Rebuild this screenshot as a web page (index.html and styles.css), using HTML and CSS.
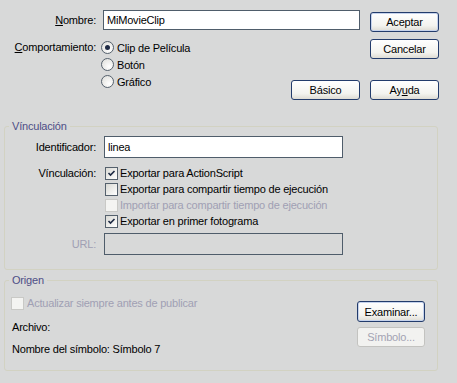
FILE: index.html
```html
<!DOCTYPE html>
<html>
<head>
  <link rel="stylesheet" href="styles.css">
</head>
<body>
  <div class="dialog">
    <div class="top">
      <div class="main">
        <div class="row">
          <label class="label" for="symbolName"><u>N</u>ombre:</label>
          <input class="text name" id="symbolName" type="text" value="MiMovieClip">
        </div>
        <div class="row behaviour">
          <span class="label"><u>C</u>omportamiento:</span>
          <div class="radios">
            <div class="opt"><span class="radio on"></span>Clip de Película</div>
            <div class="opt"><span class="radio"></span>Botón</div>
            <div class="opt"><span class="radio"></span>Gráfico</div>
          </div>
          <button class="btn basic">Básico</button>
        </div>
      </div>
      <div class="actions">
        <button class="btn default">Aceptar</button>
        <button class="btn">Cancelar</button>
        <button class="btn help">Ay<u>u</u>da</button>
      </div>
    </div>

    <fieldset class="group linkage">
      <legend>Vínculación</legend>
      <div class="field">
        <label class="flabel" for="identifier">Identificador:</label>
        <input class="text wide" id="identifier" type="text" value="linea">
      </div>
      <div class="field checks-row">
        <span class="flabel">Vínculación:</span>
        <div class="checks">
          <div class="opt">
            <span class="check"><svg width="11" height="11" viewBox="0 0 11 11"><path d="M2.5 5 L4.5 7 L8.5 3" fill="none" stroke="#1e2a44" stroke-width="1.6"/></svg></span>Exportar para ActionScript
          </div>
          <div class="opt"><span class="check"></span>Exportar para compartir tiempo de ejecución</div>
          <div class="opt off"><span class="check"></span>Importar para compartir tiempo de ejecución</div>
          <div class="opt">
            <span class="check"><svg width="11" height="11" viewBox="0 0 11 11"><path d="M2.5 5 L4.5 7 L8.5 3" fill="none" stroke="#1e2a44" stroke-width="1.6"/></svg></span>Exportar en primer fotograma
          </div>
        </div>
      </div>
      <div class="field url">
        <span class="flabel off">URL:</span>
        <input class="text wide" type="text" disabled>
      </div>
    </fieldset>

    <fieldset class="group origin">
      <legend>Origen</legend>
      <div class="origin-body">
        <div class="origin-info">
          <div class="opt off"><span class="check"></span>Actualizar siempre antes de publicar</div>
          <div class="line file">Archivo:</div>
          <div class="line">Nombre del símbolo: Símbolo 7</div>
        </div>
        <div class="origin-actions">
          <button class="btn default">Examinar...</button>
          <button class="btn" disabled>Símbolo...</button>
        </div>
      </div>
    </fieldset>
  </div>
</body>
</html>
```

FILE: styles.css
```css
body {
  margin: 0;
  background: #d8d9d9;
}

.dialog {
  width: 457px;
  height: 383px;
  font-family: "Liberation Sans", Arial, sans-serif;
  font-size: 11px;
  letter-spacing: -0.2px;
  color: #000000;
}

u {
  text-decoration: underline;
}

/* top area */

.top {
  display: flex;
  height: 100px;
  padding-top: 10px;
  box-sizing: border-box;
}

.main {
  width: 360px;
}

.row {
  display: flex;
  align-items: center;
}

.label {
  width: 96px;
  margin-right: 7px;
  text-align: right;
  white-space: nowrap;
}

.text {
  box-sizing: border-box;
  height: 20px;
  margin: 0;
  padding: 0 3px;
  border: 1px solid #4f5d6b;
  background: #FFFFFF;
  font: inherit;
  letter-spacing: inherit;
  color: #000000;
  outline: none;
}

.name {
  width: 257px;
}

.behaviour {
  align-items: flex-start;
  margin-top: 9px;
}

.behaviour .label {
  width: 96px;
  margin-right: 5px;
  line-height: 17px;
}

.radios {
  padding-bottom: 10px;
}

.opt {
  display: flex;
  align-items: center;
  height: 17px;
  white-space: nowrap;
}

.radio {
  box-sizing: border-box;
  width: 13px;
  height: 13px;
  margin-right: 3px;
  border: 1px solid #55616d;
  border-radius: 50%;
  background: radial-gradient(circle at 65% 70%, #FFFFFF, #dcdcd8);
  position: relative;
}

.radio.on::after {
  content: "";
  position: absolute;
  left: 3px;
  top: 3px;
  width: 5px;
  height: 5px;
  border-radius: 50%;
  background: #1e2a44;
}

.basic {
  align-self: flex-end;
  width: 83px;
  margin-left: auto;
}

.actions {
  display: flex;
  flex-direction: column;
  margin-left: 10px;
  padding-top: 2px;
}

.actions .btn + .btn {
  margin-top: 7px;
}

.actions .btn.help {
  margin-top: 21px;
}

/* buttons */

.btn {
  box-sizing: border-box;
  width: 69px;
  height: 20px;
  padding: 0;
  border: 1px solid #233c6c;
  border-radius: 3px;
  background: linear-gradient(#FFFFFF, #f3f3ef 70%, #dedcd4);
  font: inherit;
  letter-spacing: inherit;
  color: #000000;
}

.btn.default {
  box-shadow: inset 0 0 0 1px #c6d3ec;
}

.btn:disabled {
  border-color: #c3c3c0;
  background: #f2f2f0;
  color: #a3a3b3;
}

/* group boxes */

.group {
  margin: 19px 19px 0 4px;
  padding: 3px 0 14px 0;
  border: 1px solid #d2d2c2;
  border-radius: 3px;
}

.group legend {
  margin-left: 4px;
  padding: 0 3px;
  line-height: 14px;
  color: #4e4e86;
}

.field {
  display: flex;
  align-items: center;
}

.flabel {
  width: 91px;
  margin-right: 8px;
  text-align: right;
  white-space: nowrap;
}

.wide {
  width: 239px;
  height: 22px;
}

.text:disabled {
  background: #d8d9d9;
}

.checks-row {
  align-items: flex-start;
  margin-top: 7px;
}

.checks-row .flabel {
  line-height: 16px;
}

.checks {
  padding-left: 1px;
}

.checks .opt {
  height: 16px;
}

.check {
  box-sizing: border-box;
  display: flex;
  align-items: center;
  justify-content: center;
  width: 13px;
  height: 13px;
  margin-right: 2px;
  border: 1px solid #55616d;
  background: linear-gradient(135deg, #d9d9d4, #FFFFFF);
}

.off {
  color: #a0a0b4;
}

.off .check {
  border-color: #c9c9c6;
  background: #f4f4f2;
}

.url {
  margin-top: 4px;
}

/* origin */

.origin {
  margin-top: 3px;
  padding-top: 0;
}

.origin-body {
  display: flex;
  justify-content: space-between;
}

.origin-info {
  padding: 8px 0 0 6px;
}

.origin-info .opt {
  height: 16px;
}

.origin-info .check {
  margin-right: 3px;
}

.line {
  margin-left: 1px;
  line-height: 14px;
}

.file {
  margin-top: 9px;
}

.file + .line {
  margin-top: 8px;
}

.origin-actions {
  display: flex;
  flex-direction: column;
  margin-right: 12px;
  padding-top: 14px;
}

.origin-actions .btn {
  width: 68px;
}

.origin-actions .default {
  height: 21px;
}

.origin-actions .btn + .btn {
  margin-top: 5px;
}
```
